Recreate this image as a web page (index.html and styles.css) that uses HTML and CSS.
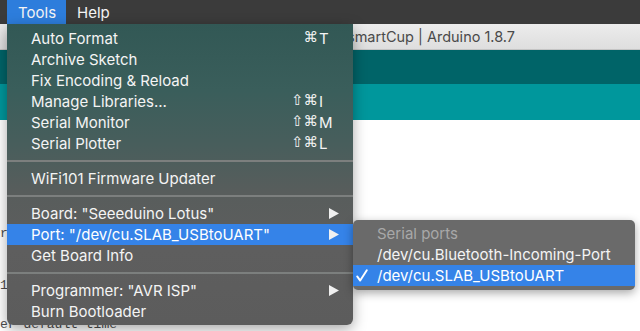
FILE: index.html
```html
<!DOCTYPE html>
<html lang="en">
<head>
    <meta charset="UTF-8">
    <meta name="viewport" content="width=device-width, initial-scale=1.0">
    <title>SmartCup | Arduino 1.8.7</title>
    <link rel="stylesheet" href="styles.css">
</head>
<body>
    <div class="menubar">
        <span class="menubar-item active">Tools</span>
        <span class="menubar-item">Help</span>
    </div>

    <div class="window">
        <div class="titlebar">
            <span class="title">smartCup | Arduino 1.8.7</span>
        </div>
        <div class="toolbar"></div>
        <div class="tabs"></div>
        <div class="editor">
            <div class="line">r</div>
            <div class="line"></div>
            <div class="line"></div>
            <div class="line"></div>
            <div class="line">1</div>
            <div class="line"></div>
            <div class="line"></div>
            <div class="line">er default time</div>
        </div>
    </div>

    <!-- Tools menu -->
    <div class="menu">
        <div class="item"><span class="label">Auto Format</span><span class="keys"><span class="mods">&#8984;</span><span class="key">T</span></span></div>
        <div class="item"><span class="label">Archive Sketch</span></div>
        <div class="item"><span class="label">Fix Encoding &amp; Reload</span></div>
        <div class="item"><span class="label">Manage Libraries...</span><span class="keys"><span class="mods">&#8679;&#8984;</span><span class="key">I</span></span></div>
        <div class="item"><span class="label">Serial Monitor</span><span class="keys"><span class="mods">&#8679;&#8984;</span><span class="key">M</span></span></div>
        <div class="item"><span class="label">Serial Plotter</span><span class="keys"><span class="mods">&#8679;&#8984;</span><span class="key">L</span></span></div>
        <div class="sep"></div>
        <div class="item"><span class="label">WiFi101 Firmware Updater</span></div>
        <div class="sep"></div>
        <div class="item"><span class="label">Board: "Seeeduino Lotus"</span><svg class="arrow" width="10" height="11" viewBox="0 0 10 11"><path d="M0 0 L10 5.5 L0 11 Z"/></svg></div>
        <div class="item selected"><span class="label">Port: "/dev/cu.SLAB_USBtoUART"</span><svg class="arrow" width="10" height="11" viewBox="0 0 10 11"><path d="M0 0 L10 5.5 L0 11 Z"/></svg></div>
        <div class="item"><span class="label">Get Board Info</span></div>
        <div class="sep"></div>
        <div class="item"><span class="label">Programmer: "AVR ISP"</span><svg class="arrow" width="10" height="11" viewBox="0 0 10 11"><path d="M0 0 L10 5.5 L0 11 Z"/></svg></div>
        <div class="item"><span class="label">Burn Bootloader</span></div>
    </div>

    <!-- Port submenu -->
    <div class="submenu">
        <div class="item disabled"><span class="check"></span><span class="label">Serial ports</span></div>
        <div class="item"><span class="check"></span><span class="label">/dev/cu.Bluetooth-Incoming-Port</span></div>
        <div class="item selected"><span class="check"><svg width="12" height="13" viewBox="0 0 12 13"><path d="M1.2 7.4 L4.2 11.6 L10.8 1.2" fill="none" stroke="#fff" stroke-width="1.9" stroke-linecap="round" stroke-linejoin="round"/></svg></span><span class="label">/dev/cu.SLAB_USBtoUART</span></div>
    </div>
</body>
</html>
```

FILE: styles.css
```css
body {
    margin: 0;
    width: 640px;
    height: 331px;
    overflow: hidden;
    background-color: #f2f2f2;
    font-family: Inter, "Noto Sans", sans-serif;
    position: relative;
}
.menubar {
    height: 24px;
    background-color: #3b3b3b;
    display: flex;
    padding-left: 7px;
}
.menubar-item {
    color: #f4f4f4;
    font-size: 15px;
    line-height: 25px;
    padding: 0 10px 0 11px;
}
.menubar-item.active {
    background-color: #2d7ddc;
}
.window {
    display: flex;
    flex-direction: column;
    height: 307px;
    overflow: hidden;
}
.titlebar {
    height: 25px;
    background: linear-gradient(#ececec, #dedede);
    border-bottom: 1px solid #c4c4c4;
    display: flex;
    align-items: center;
}
.title {
    margin-left: 347px;
    color: #4a4a4a;
    font-size: 14.5px;
}
.toolbar {
    height: 34px;
    background-color: #006468;
}
.tabs {
    height: 36px;
    background-color: #00979c;
}
.editor {
    flex: 1;
    padding-top: 107px;
    background-color: #fff;
    font-family: "Liberation Mono", monospace;
    font-size: 13px;
    line-height: 13px;
    color: #4d4d4d;
}
.line {
    height: 13px;
    white-space: pre;
}
.menu {
    position: absolute;
    left: 7px;
    top: 24px;
    width: 346px;
    padding: 4px 0 3px;
    background: linear-gradient(#325855 0%, #3a5e5b 22%, #485e5c 40%, #585d5c 56%, #5e5e5e 75%, #5c5c5c 100%);
    border-radius: 0 0 6px 6px;
    box-shadow: 0 4px 14px rgba(0, 0, 0, 0.35);
    color: #f4f4f4;
    font-size: 15px;
}
.item {
    height: 21px;
    display: flex;
    align-items: center;
    padding-left: 24px;
    padding-right: 12px;
    white-space: nowrap;
}
.item .label {
    flex: 1;
}
.item.selected {
    background-color: #3583e8;
    color: #fff;
}
.keys {
    display: flex;
}
.mods {
    width: 34px;
    text-align: right;
    font-family: "DejaVu Sans", sans-serif;
    font-size: 14.5px;
}
.key {
    width: 22px;
    padding-left: 1px;
}
.arrow {
    fill: #f0f0f0;
    margin-right: 2px;
}
.sep {
    height: 14px;
    display: flex;
    align-items: center;
}
.sep::before {
    content: "";
    flex: 1;
    height: 2px;
    background-color: #7c7f7e;
}
.submenu {
    position: absolute;
    left: 353px;
    top: 220px;
    width: 282px;
    padding: 3px 0 4px;
    background-color: #6a6a6a;
    border-radius: 5px;
    box-shadow: 0 3px 10px rgba(0, 0, 0, 0.35);
    color: #f4f4f4;
    font-size: 15px;
}
.submenu .item {
    padding-left: 3px;
}
.submenu .check {
    width: 21px;
    display: flex;
    align-items: center;
}
.submenu .disabled {
    color: #a8a8a8;
}
```
